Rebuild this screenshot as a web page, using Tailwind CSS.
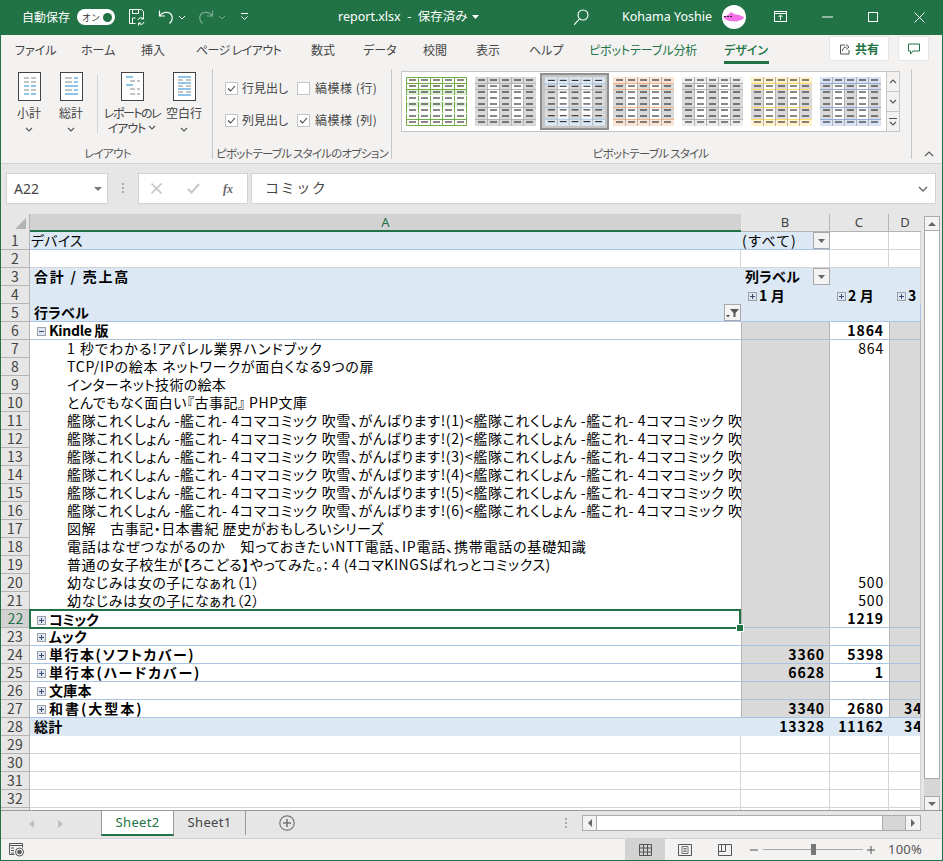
<!DOCTYPE html>
<html lang="ja">
<head>
<meta charset="utf-8">
<script src="https://cdn.jsdelivr.net/npm/@tailwindcss/browser@4"></script>
<title>report.xlsx</title>
</head>
<body class="bg-[#e6e6e6]">
<svg class="hidden" width="0" height="0">
  <defs>
    <symbol id="dashes" viewBox="0 0 61 49"><path stroke="#111" stroke-width="1" d="M3 3h7M15 3h7M27 3h7M39 3h7M51 3h7M3 9h7M15 9h7M27 9h7M39 9h7M51 9h7M3 15h7M15 15h7M27 15h7M39 15h7M51 15h7M3 21h7M15 21h7M27 21h7M39 21h7M51 21h7M3 27h7M15 27h7M27 27h7M39 27h7M51 27h7M3 33h7M15 33h7M27 33h7M39 33h7M51 33h7M3 39h7M15 39h7M27 39h7M39 39h7M51 39h7M3 45h7M15 45h7M27 45h7M39 45h7M51 45h7"/></symbol>
    <symbol id="vlines" viewBox="0 0 61 49"><path stroke="#b4b4b4" stroke-width="1" d="M12.5 0v49M24.5 0v49M36.5 0v49M48.5 0v49"/></symbol>
    <symbol id="plus" viewBox="0 0 9 9"><rect x=".5" y=".5" width="8" height="8" fill="#dde6f2" stroke="#9aa0a8"/><path stroke="#3a4a6a" d="M2 4.500h5M4.500 2v5"/></symbol>
    <symbol id="minus" viewBox="0 0 9 9"><rect x=".5" y=".5" width="8" height="8" fill="#dde6f2" stroke="#9aa0a8"/><path stroke="#3a4a6a" d="M2 4.500h5"/></symbol>
    <symbol id="chev" viewBox="0 0 8 5"><path d="M1 1l3 3 3-3" fill="none" stroke="#555" stroke-width="1.100"/></symbol>
    <symbol id="ddbtn" viewBox="0 0 17 17"><rect x=".5" y=".5" width="16" height="16" fill="#f3f3f3" stroke="#a8a8a8"/><path d="M5 7h7l-3.500 4z" fill="#666"/></symbol>
    <symbol id="chk" viewBox="0 0 13 13"><rect x=".5" y=".5" width="12" height="12" fill="#fff" stroke="#c4c4c4"/><path d="M3 6.500l2.500 2.500 4.500-5" fill="none" stroke="#444" stroke-width="1.100"/></symbol>
  </defs>
</svg>

<div class="relative w-[943px] h-[861px] overflow-hidden flex flex-col border-x border-b border-[#217346] bg-[#e6e6e6] font-['Noto_Sans_CJK_JP',sans-serif] text-[#444]">

  <!-- Title bar -->
  <div class="h-[35px] -mx-px bg-[#217346] text-white flex items-center text-[12px] shrink-0 pb-[1px]">
    <span class="ml-[22px] w-[49px] whitespace-nowrap">自動保存</span>
    <span class="ml-[6px] w-[38px] h-[16px] rounded-full bg-white flex items-center justify-between pl-[5px] pr-[3px] text-[#217346]">
      <span class="text-[9px] leading-none text-[#333]">オン</span><span class="w-[9px] h-[9px] rounded-full bg-[#217346]"></span>
    </span>
    <svg class="ml-[13px]" width="17" height="18" viewBox="0 0 17 18" fill="none" stroke="#fff"><path d="M1.500 1.500h12l2 2v5M1.500 1.500v14h6"/><path d="M4.500 1.500v4h6v-4M4.500 15v-5h3"/><path d="M10 12a3 3 0 0 1 5-1.500M16 14a3 3 0 0 1-5 1.500"/><path d="M15.500 8.500v2.500h-2.500M10.500 17.500v-2.500h2.500"/></svg>
    <svg class="ml-[13px]" width="17" height="17" viewBox="0 0 17 17" fill="none" stroke="#fff" stroke-width="1.200"><path d="M1.500 1.500v5.500h5.500"/><path d="M1.800 6.800c2.500-3.500 8.200-4.800 11-1.800 2.600 2.800 1.500 7-1.300 9.500"/></svg>
    <svg class="ml-[3px]" width="8" height="5" viewBox="0 0 8 5"><path d="M1 1l3 3 3-3" fill="none" stroke="#fff"/></svg>
    <svg class="ml-[11px] opacity-40" width="17" height="17" viewBox="0 0 17 17" fill="none" stroke="#fff" stroke-width="1.200"><path d="M15.500 1.500v5.500h-5.500"/><path d="M15.200 6.800c-2.500-3.500-8.200-4.800-11-1.800-2.600 2.800-1.500 7 1.300 9.500"/></svg>
    <svg class="ml-[4px] opacity-40" width="8" height="5" viewBox="0 0 8 5"><path d="M1 1l3 3 3-3" fill="none" stroke="#fff"/></svg>
    <svg class="ml-[14px]" width="9" height="8" viewBox="0 0 9 8" fill="none" stroke="#fff"><path d="M1 .5h7"/><path d="M1.500 3.500l3 3 3-3"/></svg>
    <span class="ml-[89px] w-[130px] whitespace-nowrap font-['Noto_Sans','Noto_Sans_CJK_JP',sans-serif] text-[12.500px]">report.xlsx&nbsp; -&nbsp; 保存済み</span>
    <svg class="ml-[4px]" width="7" height="4"><path d="M0 0h7l-3.500 4z" fill="#fff"/></svg>
    <svg class="ml-[94px]" width="16" height="17" viewBox="0 0 16 17" fill="none" stroke="#fff" stroke-width="1.100"><circle cx="10" cy="6" r="5"/><path d="M6.500 9.800L1 15.800"/></svg>
    <span class="ml-[33px] w-[91px] whitespace-nowrap font-['Noto_Sans','Noto_Sans_CJK_JP',sans-serif] text-[12.500px]">Kohama Yoshie</span>
    <span class="ml-[9px] w-[24px] h-[24px] rounded-full bg-white flex items-center justify-center">
      <svg width="22" height="10" viewBox="0 0 22 10"><path d="M0 5l5-2 3-3 3 2 5 1 5 2-1 2-6 2.500-8-.5-4-2z" fill="#f46ee8"/><path d="M1 4.500h8" stroke="#222" stroke-width="1" stroke-dasharray="2 1"/></svg>
    </span>
    <svg class="ml-[28px]" width="13" height="12" viewBox="0 0 13 12" fill="none" stroke="#fff"><rect x=".5" y=".5" width="12" height="10"/><path d="M.5 2.500h12M6.500 9V4.500M4.500 6l2-2 2 2"/></svg>
    <svg class="ml-[35px]" width="11" height="2"><path d="M0 1h11" stroke="#fff"/></svg>
    <svg class="ml-[35px]" width="10" height="10" fill="none" stroke="#fff"><rect x=".5" y=".5" width="9" height="9"/></svg>
    <svg class="ml-[36px]" width="11" height="11" fill="none" stroke="#fff"><path d="M.5.500l10 10M10.500.500l-10 10"/></svg>
  </div>

  <!-- Tabs -->
  <div class="relative h-[30px] bg-[#f3f2f1] flex items-center text-[12px] text-[#444] shrink-0 pb-[1px] whitespace-nowrap [font-feature-settings:'palt']">
    <span class="ml-[14px] w-[38px]">ファイル</span>
    <span class="ml-[28px] w-[33px]">ホーム</span>
    <span class="ml-[27px] w-[26px]">挿入</span>
    <span class="ml-[29px] w-[86px] tracking-[-0.600px]">ページ レイアウト</span>
    <span class="ml-[29px] w-[27px]">数式</span>
    <span class="ml-[25px] w-[33px]">データ</span>
    <span class="ml-[27px] w-[26px]">校閲</span>
    <span class="ml-[27px] w-[27px]">表示</span>
    <span class="ml-[26px] w-[33px]">ヘルプ</span>
    <span class="ml-[27px] w-[108px] text-[#217346] tracking-[-0.100px]">ピボットテーブル分析</span>
    <span class="ml-[27px] w-[45px] text-[#217346] font-medium border-b-[3px] border-[#217346] h-[27px] leading-[25px] mt-[1px]">デザイン</span>
    <span class="ml-[60px] w-[60px] h-[25px] bg-white border border-[#e6e6e6] rounded-[2px] flex items-center justify-center gap-[4px] text-[#217346] font-bold -mt-[2px]">
      <svg width="12" height="12" viewBox="0 0 12 12" fill="none" stroke="#555"><path d="M6 2H1.500v9H10V7"/><path d="M3.500 8c0-3 2-4 4-4M7 1.500L10 4 7 6.500"/></svg>共有
    </span>
    <span class="ml-[9px] w-[31px] h-[25px] bg-white border border-[#e6e6e6] rounded-[2px] flex items-center justify-center -mt-[2px]">
      <svg width="12" height="12" viewBox="0 0 12 12" fill="none" stroke="#217346"><path d="M.5 1h11v7H5L2.500 11V8H.5z"/></svg>
    </span>
  </div>

  <!-- Ribbon -->
  <div class="relative h-[98px] bg-[#f3f2f1] flex text-[12px] text-[#444] border-b border-[#d2d2d2] shrink-0 box-content [font-feature-settings:'palt']">
    <!-- group layout -->
    <div class="w-[212px] h-[90px] mt-[4px] flex flex-col border-r border-[#c6c6c6]">
      <div class="h-[77px] shrink-0 flex text-center leading-[15px] relative">
        <div class="w-[42px] ml-[7px] flex flex-col items-center">
          <svg class="mt-[3px]" width="23" height="29" viewBox="0 0 23 29"><rect x=".5" y=".5" width="22" height="28" fill="#fff" stroke="#444"/><path stroke="#888" d="M6 6h5M13 6h5M6 10h5M13 10h5M6 18h5M13 18h5"/><path stroke="#1e88d6" d="M6 14h5M13 14h5M6 22h5M13 22h5"/></svg>
          <span class="mt-[4px]">小計</span><svg class="mt-[7px]" width="8" height="5"><use href="#chev"/></svg>
        </div>
        <div class="w-[42px] flex flex-col items-center">
          <svg class="mt-[3px]" width="23" height="29" viewBox="0 0 23 29"><rect x=".5" y=".5" width="22" height="28" fill="#fff" stroke="#444"/><path stroke="#888" d="M5 6h7M5 10h7M5 18h7"/><path stroke="#1e88d6" d="M14 6h4M14 10h4M5 14h13M14 18h4M5 22h13"/></svg>
          <span class="mt-[4px]">総計</span><svg class="mt-[7px]" width="8" height="5"><use href="#chev"/></svg>
        </div>
        <div class="w-px h-[58px] bg-[#d2d2d2] mt-[6px] ml-[5px]"></div>
        <div class="w-[60px] ml-[4px] flex flex-col items-center">
          <svg class="mt-[3px]" width="23" height="29" viewBox="0 0 23 29"><rect x=".5" y=".5" width="22" height="28" fill="#fff" stroke="#444"/><path stroke="#1e88d6" d="M5 5h7M5 13h7"/><path stroke="#888" d="M9 9h5M16 9h3M9 17h5M16 17h3M9 22h5M16 22h3"/></svg>
          <span class="mt-[4px] whitespace-nowrap tracking-[-1.500px]">レポートのレ</span>
          <span class="whitespace-nowrap flex items-center gap-[3px] tracking-[-1px]">イアウト<svg width="8" height="5"><use href="#chev"/></svg></span>
        </div>
        <div class="w-[42px] ml-[1px] flex flex-col items-center">
          <svg class="mt-[3px]" width="23" height="29" viewBox="0 0 23 29"><rect x=".5" y=".5" width="22" height="28" fill="#fff" stroke="#444"/><path stroke="#1e88d6" d="M5 5h13M5 11h13M5 17h13M5 23h13"/><path stroke="#888" d="M5 8h5M13 8h5M5 14h5M13 14h5M5 20h5M13 20h5"/></svg>
          <span class="mt-[4px] whitespace-nowrap">空白行</span><svg class="mt-[7px]" width="8" height="5"><use href="#chev"/></svg>
        </div>
      </div>
      <div class="text-center text-[11.500px] leading-[15px] text-[#555] ml-[2px] tracking-[-0.700px]">レイアウト</div>
    </div>
    <!-- group options -->
    <div class="w-[179px] h-[90px] mt-[4px] flex flex-col border-r border-[#c6c6c6]">
      <div class="h-[77px] shrink-0 grid grid-cols-[72px_1fr] pl-[12px] pt-[10px] auto-rows-[32px] whitespace-nowrap">
        <label class="flex items-center h-[18px] gap-[4px]"><svg width="13" height="13"><use href="#chk"/></svg>行見出し</label>
        <label class="flex items-center h-[18px] gap-[5px] tracking-[0.500px]"><span class="w-[13px] h-[13px] bg-white border border-[#c4c4c4]"></span>縞模様 (行)</label>
        <label class="flex items-center h-[18px] gap-[4px]"><svg width="13" height="13"><use href="#chk"/></svg>列見出し</label>
        <label class="flex items-center h-[18px] gap-[5px] tracking-[0.500px]"><svg width="13" height="13"><use href="#chk"/></svg>縞模様 (列)</label>
      </div>
      <div class="text-center text-[11.500px] leading-[15px] text-[#555] whitespace-nowrap tracking-[-0.800px]">ピボットテーブル スタイルのオプション</div>
    </div>
    <!-- group gallery -->
    <div class="w-[520px] h-[90px] mt-[4px] flex flex-col border-r border-[#c6c6c6]">
      <div class="h-[77px] shrink-0 flex pl-[9px] pt-[2px]">
        <div class="w-[486px] h-[61px] bg-white border border-[#c6c6c6] flex items-center pl-[4px] gap-[8px]">
          <!-- green -->
          <svg class="shrink-0" width="61" height="49" viewBox="0 0 61 49">
            <rect width="61" height="49" fill="#fff"/>
            <path fill="#e2efda" d="M0 12h61v6H0zM0 24h61v6H0zM0 36h0z"/>
            <path fill="none" stroke="#70ad47" d="M.5.500h60v48H.5zM12.500 0v49M24.500 0v49M36.500 0v49M48.500 0v49M0 6.500h61M0 12.500h61M0 42.500h61"/>
            <path stroke="#fff" d="M0 18.500h61M0 24.500h61M0 36.500h61"/>
            <use href="#dashes"/>
          </svg>
          <!-- gray -->
          <svg class="shrink-0" width="61" height="49" viewBox="0 0 61 49">
            <rect width="61" height="49" fill="#d9d9d9"/>
            <path fill="#fff" d="M13 6h11v36H13zM37 6h11v36H37z"/>
            <path stroke="#b4b4b4" d="M0 6.500h61M0 12.500h61M0 30.500h61M0 42.500h61"/>
            <use href="#vlines"/><use href="#dashes"/>
          </svg>
          <!-- blue selected -->
          <div class="shrink-0 w-[69px] h-[57px] bg-[#c6c6c6] border-2 border-[#8f8f8f] -mx-[4px] flex items-center justify-center">
            <svg width="60" height="49" viewBox="0 0 61 49">
              <rect width="61" height="49" fill="#d9d9d9"/>
              <path fill="#dce9f5" d="M0 0h61v6H0zM0 43h61v6H0z"/>
              <path fill="#fff" d="M13 6h11v37H13zM37 6h11v37H37z"/>
              <path stroke="#9dc3e6" d="M0 6.500h61M0 30.500h61M0 42.500h61"/><path stroke="#b4b4b4" d="M0 12.500h61"/>
              <use href="#vlines"/><use href="#dashes"/>
            </svg>
          </div>
          <!-- orange -->
          <svg class="shrink-0" width="61" height="49" viewBox="0 0 61 49">
            <rect width="61" height="49" fill="#d9d9d9"/>
            <path fill="#fbe5d6" d="M0 0h61v6H0zM0 43h61v6H0z"/>
            <path fill="#fff" d="M13 6h11v37H13zM37 6h11v37H37z"/>
            <path stroke="#f4b183" d="M0 6.500h61M0 12.500h61M0 30.500h61M0 42.500h61"/>
            <use href="#vlines"/><use href="#dashes"/>
          </svg>
          <!-- gray 2 -->
          <svg class="shrink-0" width="61" height="49" viewBox="0 0 61 49">
            <rect width="61" height="49" fill="#d9d9d9"/>
            <path fill="#ededed" d="M0 0h61v6H0zM0 43h61v6H0z"/>
            <path fill="#fff" d="M13 6h11v37H13zM37 6h11v37H37z"/>
            <path stroke="#b4b4b4" d="M0 6.500h61M0 12.500h61M0 30.500h61M0 42.500h61"/>
            <use href="#vlines"/><use href="#dashes"/>
          </svg>
          <!-- yellow -->
          <svg class="shrink-0" width="61" height="49" viewBox="0 0 61 49">
            <rect width="61" height="49" fill="#d9d9d9"/>
            <path fill="#fff2cc" d="M0 0h61v6H0zM0 43h61v6H0z"/>
            <path fill="#fff" d="M13 6h11v37H13zM37 6h11v37H37z"/>
            <path stroke="#ffd966" d="M0 6.500h61M0 12.500h61M0 30.500h61M0 42.500h61"/>
            <use href="#vlines"/><use href="#dashes"/>
          </svg>
          <!-- periwinkle -->
          <svg class="shrink-0" width="61" height="49" viewBox="0 0 61 49">
            <rect width="61" height="49" fill="#d9d9d9"/>
            <path fill="#d9e2f3" d="M0 0h61v6H0zM0 43h61v6H0z"/>
            <path fill="#fff" d="M13 6h11v37H13zM37 6h11v37H37z"/>
            <path stroke="#8eaadb" d="M0 6.500h61M0 12.500h61M0 30.500h61M0 42.500h61"/>
            <use href="#vlines"/><use href="#dashes"/>
          </svg>
        </div>
        <div class="w-[14px] h-[61px] flex flex-col -ml-px">
          <div class="h-[21px] bg-[#f3f2f1] border border-[#c6c6c6] flex items-center justify-center"><svg width="8" height="5" class="rotate-180"><use href="#chev"/></svg></div>
          <div class="h-[19px] bg-[#f3f2f1] border-x border-[#c6c6c6] flex items-center justify-center"><svg width="8" height="5"><use href="#chev"/></svg></div>
          <div class="h-[21px] bg-[#f3f2f1] border border-[#c6c6c6] flex flex-col items-center justify-center gap-[2px]"><span class="w-[8px] h-px bg-[#555]"></span><svg width="8" height="5"><use href="#chev"/></svg></div>
        </div>
      </div>
      <div class="text-center text-[11.500px] leading-[15px] text-[#555] whitespace-nowrap pr-[2px] tracking-[-0.750px]">ピボットテーブル スタイル</div>
    </div>
    <svg class="absolute left-[923px] top-[86px]" width="10" height="6" viewBox="0 0 10 6"><path d="M1 5l4-4 4 4" fill="none" stroke="#555" stroke-width="1.100"/></svg>
  </div>

  <!-- Formula bar -->
  <div class="h-[50px] flex items-center shrink-0 text-[#444] pb-[1px]">
    <div class="ml-[5px] w-[102px] h-[31px] bg-white border border-[#d2d2d2] flex items-center justify-between pl-[7px] pr-[5px] text-[14px] font-['Noto_Sans',sans-serif]">
      <span>A22</span><svg width="8" height="4"><path d="M0 0h8l-4 4z" fill="#777"/></svg>
    </div>
    <svg class="ml-[14px]" width="3" height="11" fill="#aaa"><rect width="2" height="2"/><rect y="4" width="2" height="2"/><rect y="8" width="2" height="2"/></svg>
    <div class="ml-[13px] w-[110px] h-[31px] bg-white border border-[#d2d2d2] flex items-center">
      <svg class="ml-[12px]" width="11" height="11" fill="none" stroke="#c8c8c8" stroke-width="1.600"><path d="M.5.500l10 10M10.500.500l-10 10"/></svg>
      <svg class="ml-[25px]" width="13" height="11" fill="none" stroke="#c8c8c8" stroke-width="2"><path d="M1 6l3.500 3.500L12 1"/></svg>
      <span class="ml-[23px] font-['Liberation_Serif',serif] italic font-bold text-[12px] text-[#666]">fx</span>
    </div>
    <div class="ml-[3px] w-[685px] h-[31px] bg-white border border-[#d2d2d2] flex items-center justify-between pl-[13px] pr-[7px] text-[14px] text-[#444] tracking-[1.600px]">
      <span class="-mt-[2px]">コミック</span><svg width="10" height="6" viewBox="0 0 10 6"><path d="M1 1l4 4 4-4" fill="none" stroke="#666" stroke-width="1.400"/></svg>
    </div>
  </div>

  <!-- Sheet area -->
  <div class="h-[596px] flex shrink-0 overflow-hidden">
    <div class="w-[920px] h-[596px] overflow-hidden grid grid-cols-[29px_711px_89px_59px_32px] auto-rows-[18px] text-[14px] leading-[17px] whitespace-nowrap text-black [font-feature-settings:'palt'] [&>div]:overflow-hidden tracking-[0.2px]">
      <!-- header -->
      <div class="bg-[#e6e6e6] border-r border-[#b4b4b4] flex items-end justify-end pr-[3px] pb-[3px]"><svg width="11" height="11"><path d="M11 0v11H0z" fill="#b4b4b4"/></svg></div>
      <div class="bg-[#d2d2d2] border-b-2 border-[#217346] text-center text-[#217346] font-['Noto_Sans',sans-serif] text-[13px]">A</div>
      <div class="bg-[#e6e6e6] border-b border-r border-[#b4b4b4] text-center text-[#444] font-['Noto_Sans',sans-serif] text-[13px]">B</div>
      <div class="bg-[#e6e6e6] border-b border-r border-[#b4b4b4] text-center text-[#444] font-['Noto_Sans',sans-serif] text-[13px]">C</div>
      <div class="bg-[#e6e6e6] border-b border-[#b4b4b4] text-center text-[#444] font-['Noto_Sans',sans-serif] text-[13px]">D</div>

      <!-- 1 -->
      <div class="bg-[#e6e6e6] border-b border-r border-[#b4b4b4] text-center text-[#444]">1</div>
      <div class="bg-[#dce9f5] border-b border-[#a9c4e4] pl-[1px]">デバイス</div>
      <div class="relative bg-[#dce9f5] border-b border-[#a9c4e4] pl-[1px] tracking-[1.500px]">(すべて)<svg class="absolute right-0 top-0" width="17" height="17"><use href="#ddbtn"/></svg></div>
      <div class="border-b border-r border-[#d4d4d4] bg-white"></div>
      <div class="border-b border-r border-[#d4d4d4] bg-white"></div>
      <!-- 2 -->
      <div class="bg-[#e6e6e6] border-b border-r border-[#b4b4b4] text-center text-[#444]">2</div>
      <div class="border-b border-r border-[#d4d4d4] bg-white"></div>
      <div class="border-b border-r border-[#d4d4d4] bg-white"></div>
      <div class="border-b border-r border-[#d4d4d4] bg-white"></div>
      <div class="border-b border-r border-[#d4d4d4] bg-white"></div>
      <!-- 3 -->
      <div class="bg-[#e6e6e6] border-b border-r border-[#b4b4b4] text-center text-[#444]">3</div>
      <div class="bg-[#dce9f5] font-bold pl-[4px] tracking-[1.800px]">合計 / 売上高</div>
      <div class="relative bg-[#dce9f5] font-bold pl-[4px]">列ラベル<svg class="absolute right-0 top-0" width="17" height="17"><use href="#ddbtn"/></svg></div>
      <div class="bg-[#dce9f5]"></div>
      <div class="bg-[#dce9f5] border-r border-[#d4d4d4]"></div>
      <!-- 4 -->
      <div class="bg-[#e6e6e6] border-b border-r border-[#b4b4b4] text-center text-[#444]">4</div>
      <div class="bg-[#dce9f5]"></div>
      <div class="bg-[#dce9f5] font-bold pl-[7px] flex items-center gap-[2px]"><svg class="translate-y-px" width="9" height="9"><use href="#plus"/></svg>1 月</div>
      <div class="bg-[#dce9f5] font-bold pl-[7px] flex items-center gap-[2px]"><svg class="translate-y-px" width="9" height="9"><use href="#plus"/></svg>2 月</div>
      <div class="bg-[#dce9f5] font-bold pl-[8px] flex items-center gap-[2px] border-r border-[#d4d4d4]"><svg class="shrink-0 translate-y-px" width="9" height="9"><use href="#plus"/></svg>3 月</div>
      <!-- 5 -->
      <div class="bg-[#e6e6e6] border-b border-r border-[#b4b4b4] text-center text-[#444]">5</div>
      <div class="relative bg-[#dce9f5] border-b border-[#a9c4e4] font-bold pl-[4px]">行ラベル<svg class="absolute right-0 top-0" width="17" height="17" viewBox="0 0 17 17"><rect x=".5" y=".5" width="16" height="16" fill="#f3f3f3" stroke="#a8a8a8"/><path d="M6 5h9L11.500 9v4h-2V9z" fill="#555"/><path d="M2 11h4l-2 2.500z" fill="#555"/></svg></div>
      <div class="bg-[#dce9f5] border-b border-[#a9c4e4]"></div>
      <div class="bg-[#dce9f5] border-b border-[#a9c4e4]"></div>
      <div class="bg-[#dce9f5] border-b border-r border-[#a9c4e4]"></div>
      <!-- 6 -->
      <div class="bg-[#e6e6e6] border-b border-r border-[#b4b4b4] text-center text-[#444]">6</div>
      <div class="bg-white border-b border-[#a9c4e4] font-bold pl-[7px] flex items-center gap-[3px] tracking-[-0.300px]"><svg class="translate-y-px" width="9" height="9"><use href="#minus"/></svg>Kindle 版</div>
      <div class="bg-[#d9d9d9] border-x border-x-[#b4b4b4] border-b border-b-[#a9c4e4]"></div>
      <div class="bg-white border-b border-[#a9c4e4] text-right font-bold pr-[5px] tracking-[0.900px]">1864</div>
      <div class="bg-[#d9d9d9] border-x border-x-[#b4b4b4] border-b border-b-[#a9c4e4]"></div>
      <!-- 7 -->
      <div class="bg-[#e6e6e6] border-b border-r border-[#b4b4b4] text-center text-[#444]">7</div>
      <div class="bg-white pl-[37px] tracking-[1.050px]">1 秒でわかる!アパレル業界ハンドブック</div>
      <div class="bg-[#d9d9d9] border-x border-[#b4b4b4]"></div>
      <div class="bg-white text-right pr-[5px] tracking-[0.800px]">864</div>
      <div class="bg-[#d9d9d9] border-x border-[#b4b4b4]"></div>
      <!-- 8 -->
      <div class="bg-[#e6e6e6] border-b border-r border-[#b4b4b4] text-center text-[#444]">8</div>
      <div class="bg-white pl-[37px] tracking-[0.750px]">TCP/IPの絵本 ネットワークが面白くなる9つの扉</div>
      <div class="bg-[#d9d9d9] border-x border-[#b4b4b4]"></div>
      <div class="bg-white"></div>
      <div class="bg-[#d9d9d9] border-x border-[#b4b4b4]"></div>
      <!-- 9 -->
      <div class="bg-[#e6e6e6] border-b border-r border-[#b4b4b4] text-center text-[#444]">9</div>
      <div class="bg-white pl-[37px] tracking-[0.300px]">インターネット技術の絵本</div>
      <div class="bg-[#d9d9d9] border-x border-[#b4b4b4]"></div>
      <div class="bg-white"></div>
      <div class="bg-[#d9d9d9] border-x border-[#b4b4b4]"></div>
      <!-- 10 -->
      <div class="bg-[#e6e6e6] border-b border-r border-[#b4b4b4] text-center text-[#444]">10</div>
      <div class="bg-white pl-[37px] tracking-[0.500px]">とんでもなく面白い『古事記』 PHP文庫</div>
      <div class="bg-[#d9d9d9] border-x border-[#b4b4b4]"></div>
      <div class="bg-white"></div>
      <div class="bg-[#d9d9d9] border-x border-[#b4b4b4]"></div>
      <!-- 11 -->
      <div class="bg-[#e6e6e6] border-b border-r border-[#b4b4b4] text-center text-[#444]">11</div>
      <div class="bg-white pl-[37px] tracking-[0.650px]">艦隊これくしょん -艦これ- 4コマコミック 吹雪、がんばります!(1)&lt;艦隊これくしょん -艦これ- 4コマコミック 吹雪、がんばります!(1)</div>
      <div class="bg-[#d9d9d9] border-x border-[#b4b4b4]"></div>
      <div class="bg-white"></div>
      <div class="bg-[#d9d9d9] border-x border-[#b4b4b4]"></div>
      <!-- 12 -->
      <div class="bg-[#e6e6e6] border-b border-r border-[#b4b4b4] text-center text-[#444]">12</div>
      <div class="bg-white pl-[37px] tracking-[0.650px]">艦隊これくしょん -艦これ- 4コマコミック 吹雪、がんばります!(2)&lt;艦隊これくしょん -艦これ- 4コマコミック 吹雪、がんばります!(2)</div>
      <div class="bg-[#d9d9d9] border-x border-[#b4b4b4]"></div>
      <div class="bg-white"></div>
      <div class="bg-[#d9d9d9] border-x border-[#b4b4b4]"></div>
      <!-- 13 -->
      <div class="bg-[#e6e6e6] border-b border-r border-[#b4b4b4] text-center text-[#444]">13</div>
      <div class="bg-white pl-[37px] tracking-[0.650px]">艦隊これくしょん -艦これ- 4コマコミック 吹雪、がんばります!(3)&lt;艦隊これくしょん -艦これ- 4コマコミック 吹雪、がんばります!(3)</div>
      <div class="bg-[#d9d9d9] border-x border-[#b4b4b4]"></div>
      <div class="bg-white"></div>
      <div class="bg-[#d9d9d9] border-x border-[#b4b4b4]"></div>
      <!-- 14 -->
      <div class="bg-[#e6e6e6] border-b border-r border-[#b4b4b4] text-center text-[#444]">14</div>
      <div class="bg-white pl-[37px] tracking-[0.650px]">艦隊これくしょん -艦これ- 4コマコミック 吹雪、がんばります!(4)&lt;艦隊これくしょん -艦これ- 4コマコミック 吹雪、がんばります!(4)</div>
      <div class="bg-[#d9d9d9] border-x border-[#b4b4b4]"></div>
      <div class="bg-white"></div>
      <div class="bg-[#d9d9d9] border-x border-[#b4b4b4]"></div>
      <!-- 15 -->
      <div class="bg-[#e6e6e6] border-b border-r border-[#b4b4b4] text-center text-[#444]">15</div>
      <div class="bg-white pl-[37px] tracking-[0.650px]">艦隊これくしょん -艦これ- 4コマコミック 吹雪、がんばります!(5)&lt;艦隊これくしょん -艦これ- 4コマコミック 吹雪、がんばります!(5)</div>
      <div class="bg-[#d9d9d9] border-x border-[#b4b4b4]"></div>
      <div class="bg-white"></div>
      <div class="bg-[#d9d9d9] border-x border-[#b4b4b4]"></div>
      <!-- 16 -->
      <div class="bg-[#e6e6e6] border-b border-r border-[#b4b4b4] text-center text-[#444]">16</div>
      <div class="bg-white pl-[37px] tracking-[0.650px]">艦隊これくしょん -艦これ- 4コマコミック 吹雪、がんばります!(6)&lt;艦隊これくしょん -艦これ- 4コマコミック 吹雪、がんばります!(6)</div>
      <div class="bg-[#d9d9d9] border-x border-[#b4b4b4]"></div>
      <div class="bg-white"></div>
      <div class="bg-[#d9d9d9] border-x border-[#b4b4b4]"></div>
      <!-- 17 -->
      <div class="bg-[#e6e6e6] border-b border-r border-[#b4b4b4] text-center text-[#444]">17</div>
      <div class="bg-white pl-[37px] tracking-[0.450px]">図解　古事記・日本書紀 歴史がおもしろいシリーズ</div>
      <div class="bg-[#d9d9d9] border-x border-[#b4b4b4]"></div>
      <div class="bg-white"></div>
      <div class="bg-[#d9d9d9] border-x border-[#b4b4b4]"></div>
      <!-- 18 -->
      <div class="bg-[#e6e6e6] border-b border-r border-[#b4b4b4] text-center text-[#444]">18</div>
      <div class="bg-white pl-[37px] tracking-[0.800px]">電話はなぜつながるのか　知っておきたいNTT電話、IP電話、携帯電話の基礎知識</div>
      <div class="bg-[#d9d9d9] border-x border-[#b4b4b4]"></div>
      <div class="bg-white"></div>
      <div class="bg-[#d9d9d9] border-x border-[#b4b4b4]"></div>
      <!-- 19 -->
      <div class="bg-[#e6e6e6] border-b border-r border-[#b4b4b4] text-center text-[#444]">19</div>
      <div class="bg-white pl-[37px] tracking-[0.550px]">普通の女子校生が【ろこどる】やってみた。: 4 (4コマKINGSぱれっとコミックス)</div>
      <div class="bg-[#d9d9d9] border-x border-[#b4b4b4]"></div>
      <div class="bg-white"></div>
      <div class="bg-[#d9d9d9] border-x border-[#b4b4b4]"></div>
      <!-- 20 -->
      <div class="bg-[#e6e6e6] border-b border-r border-[#b4b4b4] text-center text-[#444]">20</div>
      <div class="bg-white pl-[37px] tracking-[0.600px]">幼なじみは女の子になぁれ（1）</div>
      <div class="bg-[#d9d9d9] border-x border-[#b4b4b4]"></div>
      <div class="bg-white text-right pr-[5px] tracking-[0.800px]">500</div>
      <div class="bg-[#d9d9d9] border-x border-[#b4b4b4]"></div>
      <!-- 21 -->
      <div class="bg-[#e6e6e6] border-b border-r border-[#b4b4b4] text-center text-[#444]">21</div>
      <div class="bg-white pl-[37px] tracking-[0.600px]">幼なじみは女の子になぁれ（2）</div>
      <div class="bg-[#d9d9d9] border-x border-[#b4b4b4]"></div>
      <div class="bg-white text-right pr-[5px] tracking-[0.800px]">500</div>
      <div class="bg-[#d9d9d9] border-x border-[#b4b4b4]"></div>
      <!-- 22 -->
      <div class="bg-[#d2d2d2] border-b border-b-[#b4b4b4] text-center text-[#217346]">22</div>
      <div class="relative z-10 overflow-visible! bg-white border-2 border-[#217346] font-bold pl-[6px] flex items-center gap-[3px] -ml-px -mt-px h-[20px] tracking-[-0.300px]"><svg class="translate-y-px" width="9" height="9"><use href="#plus"/></svg>コミック<span class="absolute -right-[4px] -bottom-[4px] w-[6px] h-[6px] bg-[#217346] outline outline-white"></span></div>
      <div class="bg-[#d9d9d9] border-x border-x-[#b4b4b4] border-b border-b-[#a9c4e4]"></div>
      <div class="bg-white border-b border-[#a9c4e4] text-right font-bold pr-[5px] tracking-[0.900px]">1219</div>
      <div class="bg-[#d9d9d9] border-x border-x-[#b4b4b4] border-b border-b-[#a9c4e4]"></div>
      <!-- 23 -->
      <div class="bg-[#e6e6e6] border-b border-r border-[#b4b4b4] text-center text-[#444]">23</div>
      <div class="bg-white border-b border-[#a9c4e4] font-bold pl-[7px] flex items-center gap-[3px]"><svg class="translate-y-px" width="9" height="9"><use href="#plus"/></svg>ムック</div>
      <div class="bg-[#d9d9d9] border-x border-x-[#b4b4b4] border-b border-b-[#a9c4e4]"></div>
      <div class="bg-white border-b border-[#a9c4e4]"></div>
      <div class="bg-[#d9d9d9] border-x border-x-[#b4b4b4] border-b border-b-[#a9c4e4]"></div>
      <!-- 24 -->
      <div class="bg-[#e6e6e6] border-b border-r border-[#b4b4b4] text-center text-[#444]">24</div>
      <div class="bg-white border-b border-[#a9c4e4] font-bold pl-[7px] flex items-center gap-[3px] tracking-[1.500px]"><svg class="translate-y-px" width="9" height="9"><use href="#plus"/></svg>単行本(ソフトカバー)</div>
      <div class="bg-[#d9d9d9] border-x border-x-[#b4b4b4] border-b border-b-[#a9c4e4] text-right font-bold pr-[4px] tracking-[0.900px]">3360</div>
      <div class="bg-white border-b border-[#a9c4e4] text-right font-bold pr-[5px] tracking-[0.900px]">5398</div>
      <div class="bg-[#d9d9d9] border-x border-x-[#b4b4b4] border-b border-b-[#a9c4e4]"></div>
      <!-- 25 -->
      <div class="bg-[#e6e6e6] border-b border-r border-[#b4b4b4] text-center text-[#444]">25</div>
      <div class="bg-white border-b border-[#a9c4e4] font-bold pl-[7px] flex items-center gap-[3px] tracking-[1.800px]"><svg class="translate-y-px" width="9" height="9"><use href="#plus"/></svg>単行本(ハードカバー)</div>
      <div class="bg-[#d9d9d9] border-x border-x-[#b4b4b4] border-b border-b-[#a9c4e4] text-right font-bold pr-[4px] tracking-[0.900px]">6628</div>
      <div class="bg-white border-b border-[#a9c4e4] text-right font-bold pr-[5px] tracking-[0.900px]">1</div>
      <div class="bg-[#d9d9d9] border-x border-x-[#b4b4b4] border-b border-b-[#a9c4e4]"></div>
      <!-- 26 -->
      <div class="bg-[#e6e6e6] border-b border-r border-[#b4b4b4] text-center text-[#444]">26</div>
      <div class="bg-white border-b border-[#a9c4e4] font-bold pl-[7px] flex items-center gap-[3px]"><svg class="translate-y-px" width="9" height="9"><use href="#plus"/></svg>文庫本</div>
      <div class="bg-[#d9d9d9] border-x border-x-[#b4b4b4] border-b border-b-[#a9c4e4]"></div>
      <div class="bg-white border-b border-[#a9c4e4]"></div>
      <div class="bg-[#d9d9d9] border-x border-x-[#b4b4b4] border-b border-b-[#a9c4e4]"></div>
      <!-- 27 -->
      <div class="bg-[#e6e6e6] border-b border-r border-[#b4b4b4] text-center text-[#444]">27</div>
      <div class="bg-white border-b border-[#a9c4e4] font-bold pl-[7px] flex items-center gap-[3px] tracking-[2px]"><svg class="translate-y-px" width="9" height="9"><use href="#plus"/></svg>和書(大型本)</div>
      <div class="bg-[#d9d9d9] border-x border-x-[#b4b4b4] border-b border-b-[#a9c4e4] text-right font-bold pr-[4px] tracking-[0.900px]">3340</div>
      <div class="bg-white border-b border-[#a9c4e4] text-right font-bold pr-[5px] tracking-[0.900px]">2680</div>
      <div class="bg-[#d9d9d9] border-x border-x-[#b4b4b4] border-b border-b-[#a9c4e4] font-bold pl-[14px] tracking-[0.900px]">3400</div>
      <!-- 28 -->
      <div class="bg-[#e6e6e6] border-b border-r border-[#b4b4b4] text-center text-[#444]">28</div>
      <div class="bg-[#dce9f5] font-bold pl-[4px]">総計</div>
      <div class="bg-[#dce9f5] text-right font-bold pr-[5px] tracking-[0.900px]">13328</div>
      <div class="bg-[#dce9f5] text-right font-bold pr-[5px] tracking-[0.900px]">11162</div>
      <div class="bg-[#dce9f5] border-r border-[#d4d4d4] font-bold pl-[15px] tracking-[0.900px]">3400</div>
      <!-- 29 -->
      <div class="bg-[#e6e6e6] border-b border-r border-[#b4b4b4] text-center text-[#444]">29</div>
      <div class="border-b border-r border-[#d4d4d4] bg-white"></div>
      <div class="border-b border-r border-[#d4d4d4] bg-white"></div>
      <div class="border-b border-r border-[#d4d4d4] bg-white"></div>
      <div class="border-b border-r border-[#d4d4d4] bg-white"></div>
      <!-- 30 -->
      <div class="bg-[#e6e6e6] border-b border-r border-[#b4b4b4] text-center text-[#444]">30</div>
      <div class="border-b border-r border-[#d4d4d4] bg-white"></div>
      <div class="border-b border-r border-[#d4d4d4] bg-white"></div>
      <div class="border-b border-r border-[#d4d4d4] bg-white"></div>
      <div class="border-b border-r border-[#d4d4d4] bg-white"></div>
      <!-- 31 -->
      <div class="bg-[#e6e6e6] border-b border-r border-[#b4b4b4] text-center text-[#444]">31</div>
      <div class="border-b border-r border-[#d4d4d4] bg-white"></div>
      <div class="border-b border-r border-[#d4d4d4] bg-white"></div>
      <div class="border-b border-r border-[#d4d4d4] bg-white"></div>
      <div class="border-b border-r border-[#d4d4d4] bg-white"></div>
      <!-- 32 -->
      <div class="bg-[#e6e6e6] border-b border-r border-[#b4b4b4] text-center text-[#444]">32</div>
      <div class="border-b border-r border-[#d4d4d4] bg-white"></div>
      <div class="border-b border-r border-[#d4d4d4] bg-white"></div>
      <div class="border-b border-r border-[#d4d4d4] bg-white"></div>
      <div class="border-b border-r border-[#d4d4d4] bg-white"></div>
      <!-- 33 partial -->
      <div class="bg-[#e6e6e6] border-r border-[#b4b4b4]"></div>
      <div class="border-r border-[#d4d4d4] bg-white"></div>
      <div class="border-r border-[#d4d4d4] bg-white"></div>
      <div class="border-r border-[#d4d4d4] bg-white"></div>
      <div class="border-r border-[#d4d4d4] bg-white"></div>
    </div>
    <!-- vertical scrollbar -->
    <div class="ml-[3px] mt-[2px] w-[16px] h-[595px] flex flex-col bg-[#d6d6d6]">
      <div class="h-[15px] bg-[#f3f3f3] border border-[#ababab] flex items-center justify-center"><svg width="8" height="4"><path d="M0 4h8L4 0z" fill="#666"/></svg></div>
      <div class="h-[548px] bg-white border-x border-b border-[#ababab]"></div>
      <div class="mt-auto h-[15px] bg-[#f3f3f3] border border-[#ababab] flex items-center justify-center"><svg width="8" height="4"><path d="M0 0h8L4 4z" fill="#666"/></svg></div>
    </div>
  </div>

  <!-- Sheet tabs and horizontal scrollbar -->
  <div class="h-[28px] flex items-center border-t border-[#9a9a9a] shrink-0 text-[13px] font-['Noto_Sans',sans-serif]">
    <svg class="ml-[28px] -mt-[2px]" width="5" height="8"><path d="M5 0v8L0 4z" fill="#c0c0c0"/></svg>
    <svg class="ml-[24px] -mt-[2px]" width="5" height="8"><path d="M0 0v8l5-4z" fill="#c0c0c0"/></svg>
    <div class="ml-[38px] w-[73px] h-[25px] -mt-[3px] bg-white border-x border-[#9a9a9a] border-b-[2px] border-b-[#217346] text-center text-[#217346] leading-[22px] tracking-[0.300px]">Sheet2</div>
    <div class="w-[72px] h-[24px] -mt-[3px] border-r border-[#9a9a9a] text-center text-[#444] leading-[22px] tracking-[0.300px]">Sheet1</div>
    <svg class="ml-[33px] -mt-[3px]" width="16" height="16" viewBox="0 0 16 16" fill="none" stroke="#777" stroke-width="1.200"><circle cx="8" cy="8" r="7.200"/><path d="M4 8h8M8 4v8" stroke-width="1.600"/></svg>
    <svg class="ml-[270px] -mt-[3px]" width="3" height="11" fill="#aaa"><rect width="2" height="2"/><rect y="4" width="2" height="2"/><rect y="8" width="2" height="2"/></svg>
    <div class="ml-[14px] -mt-[3px] w-[339px] h-[16px] bg-[#d6d6d6] border-y border-x border-[#ababab] flex">
      <div class="w-[14px] bg-[#f3f3f3] border-r border-[#ababab] flex items-center justify-center"><svg width="4" height="8"><path d="M4 0v8L0 4z" fill="#666"/></svg></div>
      <div class="w-[286px] bg-white border-r border-[#ababab]"></div>
      <div class="ml-auto w-[15px] bg-[#f3f3f3] border-l border-[#ababab] flex items-center justify-center"><svg width="4" height="8"><path d="M0 0v8l4-4z" fill="#666"/></svg></div>
    </div>
  </div>

  <!-- Status bar -->
  <div class="h-[22px] bg-[#f3f2f1] border-t border-[#d2d2d2] flex items-center shrink-0 text-[#555] font-['Noto_Sans',sans-serif] text-[12px]">
    <svg class="ml-[8px]" width="15" height="14" viewBox="0 0 15 14" fill="none" stroke="#555"><path d="M.5 2.500V.5h13v4M.5 2.500h13M.5 2.500v9h5M2 5h3M2 7.500h3M2 10h3"/><circle cx="10.500" cy="9" r="4"/><circle cx="10.500" cy="9" r="1.800" fill="#555"/></svg>
    <div class="ml-[601px] w-[40px] h-full bg-[#d2d2d2] flex items-center justify-center">
      <svg width="13" height="12" fill="none" stroke="#555"><path d="M.5.500h12v11H.5zM4.500.500v11M8.500.500v11M.5 4h12M.5 8h12"/></svg>
    </div>
    <svg class="ml-[13px]" width="14" height="12" fill="none" stroke="#555"><path d="M.5.500h13v11H.5z"/><path d="M4 2.500h6v7H4zM5.500 4.500h3M5.500 6h3M5.500 7.500h3" stroke-width=".8"/></svg>
    <svg class="ml-[26px]" width="14" height="12" fill="none" stroke="#555"><path d="M.5.500h13v11H.5zM.5 7.500h7V.5M3.500.500v7"/></svg>
    <svg class="ml-[18px]" width="8" height="2"><path d="M0 1h8" stroke="#555"/></svg>
    <div class="ml-[5px] w-[100px] h-px bg-[#aaa] relative"><span class="absolute left-[48px] -top-[5px] w-[5px] h-[11px] bg-[#777]"></span></div>
    <svg class="ml-[4px]" width="8" height="8"><path d="M0 4h8M4 0v8" stroke="#555"/></svg>
    <span class="ml-[13px] text-[13px] tracking-[0.200px]">100%</span>
  </div>
</div>
</body>
</html>
